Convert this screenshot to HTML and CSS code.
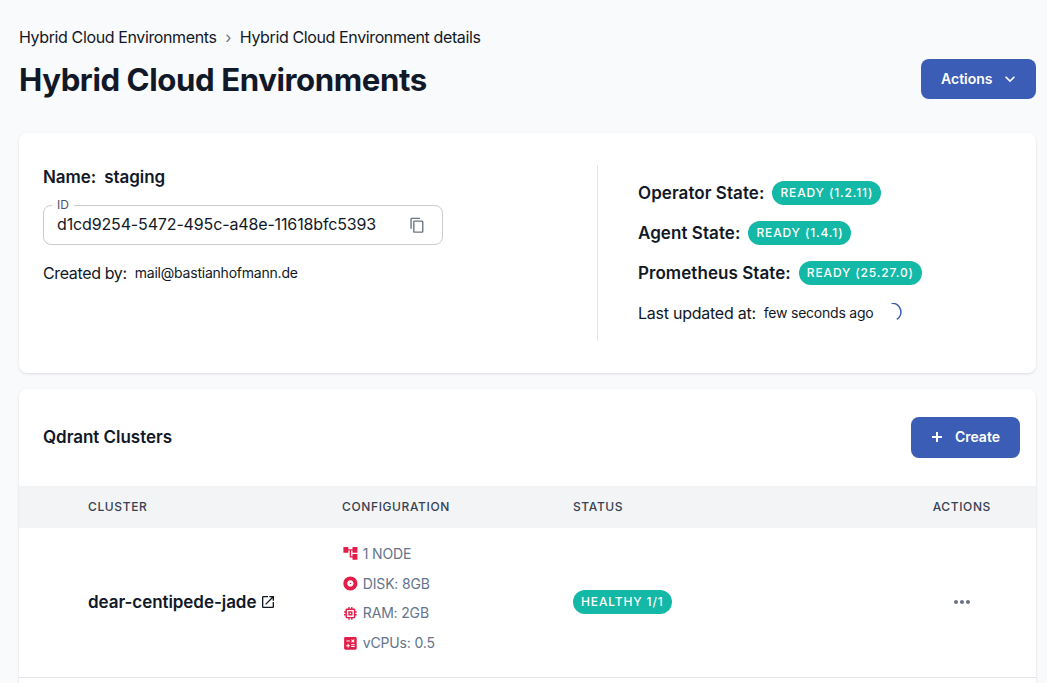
FILE: index.html
```html
<!DOCTYPE html>
<html lang="en">
<head>
<meta charset="utf-8">
<title>Hybrid Cloud Environments</title>
<link rel="stylesheet" href="styles.css">
</head>
<body>
<main class="page">
  <nav class="breadcrumb"><a>Hybrid Cloud Environments</a><span class="sep">›</span><a>Hybrid Cloud Environment details</a></nav>
  <header class="page-head">
    <h1>Hybrid Cloud Environments</h1>
    <button class="btn btn-actions"><span>Actions</span><svg width="20" height="20" viewBox="0 0 24 24"><path d="M7.41 8.59 12 13.17l4.59-4.58L18 10l-6 6-6-6z"/></svg></button>
  </header>

  <section class="card details">
    <div class="info">
      <div class="name"><span>Name:</span><span>staging</span></div>
      <div class="field">
        <label class="field-label">ID</label>
        <span class="field-value">d1cd9254-5472-495c-a48e-11618bfc5393</span>
        <svg width="16.5" height="16.5" viewBox="0 0 24 24"><path d="M16 1H4c-1.1 0-2 .9-2 2v14h2V3h12V1zm3 4H8c-1.1 0-2 .9-2 2v14c0 1.1.9 2 2 2h11c1.1 0 2-.9 2-2V7c0-1.1-.9-2-2-2zm0 16H8V7h11v14z"/></svg>
      </div>
      <div class="created"><span class="term">Created by:</span><span class="small mail">mail@bastianhofmann.de</span></div>
    </div>
    <div class="states">
      <div class="state"><b>Operator State:</b><span class="chip">READY (1.2.11)</span></div>
      <div class="state"><b>Agent State:</b><span class="chip">READY (1.4.1)</span></div>
      <div class="state"><b>Prometheus State:</b><span class="chip">READY (25.27.0)</span></div>
      <div class="state"><span class="term">Last updated at:</span><span class="small ago">few seconds ago</span><svg class="spinner" width="20" height="20" viewBox="0 0 20 20"><path d="M9.5 .2A8.8 8.8 0 0 1 14.8 16.4"/></svg></div>
    </div>
  </section>

  <section class="card clusters">
    <div class="clusters-head">
      <h2>Qdrant Clusters</h2>
      <button class="btn btn-create"><svg width="16" height="16" viewBox="0 0 24 24"><path d="M19.5 13.5h-6v6h-3v-6h-6v-3h6v-6h3v6h6z"/></svg><span>Create</span></button>
    </div>
    <div class="row thead"><span>CLUSTER</span><span>CONFIGURATION</span><span>STATUS</span><span class="end">ACTIONS</span></div>
    <div class="row tbody">
      <a class="cluster"><span>dear-centipede-jade</span><svg width="16" height="16" viewBox="0 0 24 24"><path d="M19 19H5V5h7V3H5c-1.11 0-2 .9-2 2v14c0 1.1.89 2 2 2h14c1.1 0 2-.9 2-2v-7h-2v7zM14 3v2h3.59l-9.83 9.83 1.41 1.41L19 6.41V10h2V3h-7z"/></svg></a>
      <ul class="config">
        <li><svg viewBox="0 0 24 24"><path d="M22 11V3h-7v3H9V3H2v8h7V8h2v10h4v3h7v-8h-7v3h-2V8h2v3z"/></svg><span>1 NODE</span></li>
        <li><svg viewBox="0 0 24 24"><path d="M12 2C6.48 2 2 6.48 2 12s4.48 10 10 10 10-4.48 10-10S17.52 2 12 2zm0 14.5c-2.49 0-4.5-2.01-4.5-4.5S9.51 7.5 12 7.5s4.5 2.01 4.5 4.5-2.01 4.5-4.5 4.5zm0-5.5c-.55 0-1 .45-1 1s.45 1 1 1 1-.45 1-1-.45-1-1-1z"/></svg><span>DISK: 8GB</span></li>
        <li><svg viewBox="0 0 24 24"><path d="M15 9H9v6h6V9zm-2 4h-2v-2h2v2zm8-2V9h-2V7c0-1.1-.9-2-2-2h-2V3h-2v2h-2V3H9v2H7c-1.1 0-2 .9-2 2v2H3v2h2v2H3v2h2v2c0 1.1.9 2 2 2h2v2h2v-2h2v2h2v-2h2c1.1 0 2-.9 2-2v-2h2v-2h-2v-2h2zm-4 6H7V7h10v10z"/></svg><span>RAM: 2GB</span></li>
        <li><svg viewBox="0 0 24 24"><path d="M19 3H5c-1.1 0-2 .9-2 2v14c0 1.1.9 2 2 2h14c1.1 0 2-.9 2-2V5c0-1.1-.9-2-2-2zm-5.97 4.06L14.09 6l1.41 1.41L16.91 6l1.06 1.06-1.41 1.41 1.41 1.41-1.06 1.06-1.41-1.4-1.41 1.41-1.06-1.06 1.41-1.41-1.41-1.42zm-6.78.66h5v1.5h-5v-1.5zM11.5 16h-2v2H8v-2H6v-1.5h2v-2h1.5v2h2V16zm6.5 1.25h-5v-1.5h5v1.5zm0-2.5h-5v-1.5h5v1.5z"/></svg><span>vCPUs: 0.5</span></li>
      </ul>
      <div class="status"><span class="chip">HEALTHY 1/1</span></div>
      <div class="more"><svg width="24" height="24" viewBox="0 0 24 24"><path d="M6 10c-1.1 0-2 .9-2 2s.9 2 2 2 2-.9 2-2-.9-2-2-2zm12 0c-1.1 0-2 .9-2 2s.9 2 2 2 2-.9 2-2-.9-2-2-2zm-6 0c-1.1 0-2 .9-2 2s.9 2 2 2 2-.9 2-2-.9-2-2-2z"/></svg></div>
    </div>
  </section>
</main>
</body>
</html>
```

FILE: styles.css
```css
* { box-sizing: border-box; }
body {
  margin: 0;
  background: #f9fafc;
  color: #111827;
  font: 400 16px/24px Inter, "Liberation Sans", sans-serif;
}
svg { display: block; fill: currentColor; flex: none; }
h1, h2 { margin: 0; }
span, b, a { white-space: nowrap; }

.page { padding: 25px 11px 0 19px; }
.breadcrumb { display: flex; height: 24px; letter-spacing: -.38px; }
.sep { width: 23.3px; text-align: center; color: #6b7280; }

.page-head { display: flex; justify-content: space-between; height: 50px; margin-top: 10px; }
h1 { font-size: 31.2px; line-height: 43px; font-weight: 700; letter-spacing: -.42px; }

.btn {
  display: flex;
  align-items: center;
  border: 0;
  border-radius: 8px;
  background: #3b5db5;
  color: #fff;
  font: 600 14px/20px Inter, "Liberation Sans", sans-serif;
}
.btn-actions { width: 115px; height: 40px; padding: 0 16px 0 20px; justify-content: space-between; }
.btn-create { width: 109px; height: 41px; padding: 0 20px 1px 18px; justify-content: space-between; }

.card {
  background: #fff;
  border-radius: 8px;
  box-shadow: 0 1px 3px rgba(17, 24, 39, .1), 0 1px 2px -1px rgba(17, 24, 39, .08);
}
.details { display: flex; height: 240px; margin-top: 24px; padding: 32px 24px; }
.info { width: 555px; border-right: 1px solid #e2e4ea; }
.name { display: flex; gap: 8px; height: 24px; font-size: 17px; font-weight: 600; letter-spacing: -.05px; }
.field {
  position: relative;
  display: flex;
  align-items: center;
  justify-content: space-between;
  width: 400px;
  height: 40px;
  margin-top: 16px;
  padding: 0 17px 0 13px;
  border: 1px solid #c9cbd1;
  border-radius: 8px;
}
.field svg { color: #6b7280; }
.field-value { padding-bottom: 2px; letter-spacing: -.14px; }
.field-label {
  position: absolute;
  left: 8px;
  top: -8px;
  padding: 0 5px;
  background: #fff;
  color: #4b5563;
  font-size: 12px;
  line-height: 14px;
}
.created { display: flex; gap: 8px; margin-top: 16px; }
.created .term { letter-spacing: -.36px; }
.term { letter-spacing: -.25px; }
.small { font-size: 14px; letter-spacing: -.22px; }

.states { display: flex; flex-direction: column; gap: 16px; padding: 16px 0 0 40px; }
.state { display: flex; align-items: center; height: 24px; gap: 8px; }
.state b { font-size: 17px; font-weight: 600; letter-spacing: .06px; }
.chip {
  height: 24px;
  padding: 0 8px;
  border-radius: 12px;
  background: #14b8a6;
  color: #fff;
  font-size: 12px;
  font-weight: 500;
  line-height: 24px;
  letter-spacing: .86px;
}
.spinner { fill: none; stroke: #3b5db5; stroke-width: 1.6; }

.clusters { height: 294px; margin-top: 16px; border-radius: 8px 8px 0 0; }
.clusters-head { display: flex; align-items: center; justify-content: space-between; height: 97px; padding: 0 16px 0 24px; }
h2 { padding-bottom: 2px; font-size: 17px; line-height: 24px; font-weight: 600; letter-spacing: -.03px; }
.row {
  display: grid;
  grid-template-columns: 254px 231px 1fr 120px;
  align-items: center;
  padding: 0 45px 0 69px;
}
.thead {
  height: 42px;
  background: #f3f4f6;
  color: #374151;
  font-size: 12px;
  font-weight: 550;
  letter-spacing: .62px;
}
.end { text-align: right; }
.tbody { height: 150px; padding-bottom: 1px; border-bottom: 1px solid #e2e4ea; }
.cluster { display: flex; align-items: center; gap: 4px; font-size: 17px; font-weight: 600; letter-spacing: -.06px; }
.config { margin: 0; padding: 0 0 7px; list-style: none; }
.config li { display: flex; align-items: center; gap: 4px; height: 29.8px; color: #64748b; font-size: 14px; letter-spacing: -.17px; }
.config svg { width: 16.8px; height: 16.8px; color: #e11d48; }
.status { display: flex; }
.more { display: flex; justify-content: flex-end; padding-right: 17px; color: #6b7280; }
```
